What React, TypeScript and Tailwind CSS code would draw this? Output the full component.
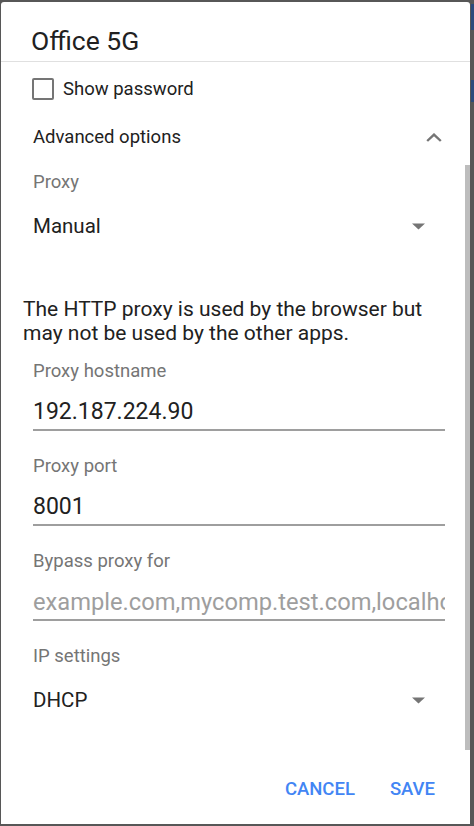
import React from 'react';

const Caret = () => (
  <svg width="13" height="7" viewBox="0 0 13 7" className="block">
    <path d="M0 0.5h13L6.5 6.5z" fill="#757575" />
  </svg>
);

const ChevronUp = () => (
  <svg width="16" height="9" viewBox="0 0 16 9" className="block">
    <path d="M1.2 8L8 1.6L14.8 8" fill="none" stroke="#757575" strokeWidth="2.4" />
  </svg>
);

const Field = ({ label, value, placeholder }: { label: string; value?: string; placeholder?: string }) => (
  <div className="pl-[32px] pr-[25px]">
    <div className="h-[24px] text-[18.5px] leading-[24px] text-[#757575]">{label}</div>
    <div
      className={`mt-[14px] h-[30px] overflow-hidden whitespace-nowrap leading-[30px] ${
        value ? 'text-[23px] text-[#212121]' : 'text-[23.7px] text-[#9e9e9e]'
      }`}
    >
      {value ?? placeholder}
    </div>
    <div className="mt-[2px] h-[2px] bg-[#9e9e9e]" />
  </div>
);

const SelectRow = ({ label, value }: { label: string; value: string }) => (
  <div className="pl-[32px] pr-[25px]">
    <div className="h-[24px] text-[18.5px] leading-[24px] text-[#757575]">{label}</div>
    <div className="mt-[18px] flex h-[28px] items-center justify-between pr-[20px]">
      <span className="text-[20.5px] leading-[28px] text-[#212121]">{value}</span>
      <Caret />
    </div>
  </div>
);

export default function App() {
  return (
    <div
      className="relative h-[826px] w-[474px] overflow-hidden bg-[#575757] pl-[1px] pt-[2px]"
      style={{ fontFamily: 'Roboto, "Noto Sans", sans-serif' }}
    >
      {/* bits of the screen behind the dialog */}
      <div className="absolute right-0 top-[4px] h-[26px] w-[3px] bg-[#2c4a7c]" />
      <div className="absolute right-0 top-[80px] h-[22px] w-[3px] bg-[#2c4a7c]" />

      <div className="relative flex h-[822px] w-[469px] flex-col rounded-t-[3px] bg-white">
        {/* Header */}
        <div className="pl-[30px] pt-[24px] pb-[5px]">
          <h1 className="text-[26.5px] leading-[30px] text-[#212121]">Office 5G</h1>
        </div>
        <div className="h-px bg-[#e0e0e0]" />

        {/* Body */}
        <div className="flex-1 overflow-hidden">
          <div className="mt-[16px] flex h-[22px] items-center gap-[9px] pl-[31px]">
            <div className="h-[22px] w-[22px] rounded-[2px] border-2 border-[#757575]" />
            <span className="text-[18.5px] leading-[22px] text-[#212121]">Show password</span>
          </div>

          <div className="mt-[25px] flex h-[24px] items-center justify-between pl-[32px] pr-[28px]">
            <span className="text-[18.5px] leading-[24px] text-[#212121]">Advanced options</span>
            <ChevronUp />
          </div>

          <div className="mt-[21px]">
            <SelectRow label="Proxy" value="Manual" />
          </div>

          <p className="mt-[57px] pl-[22px] pr-[25px] text-[21px] leading-[24px] text-[#212121]">
            The HTTP proxy is used by the browser but may not be used by the other apps.
          </p>

          <div className="mt-[14px]">
            <Field label="Proxy hostname" value="192.187.224.90" />
          </div>
          <div className="mt-[23px]">
            <Field label="Proxy port" value="8001" />
          </div>
          <div className="mt-[23px]">
            <Field label="Bypass proxy for" placeholder="example.com,mycomp.test.com,localhost" />
          </div>
          <div className="mt-[23px]">
            <SelectRow label="IP settings" value="DHCP" />
          </div>
        </div>

        {/* Footer */}
        <div className="flex justify-end gap-[35px] pb-[23px] pr-[35px]">
          <button className="h-[24px] text-[18.5px] font-medium leading-[24px] text-[#4285f4]">CANCEL</button>
          <button className="h-[24px] text-[18.5px] font-medium leading-[24px] text-[#4285f4]">SAVE</button>
        </div>

        {/* Scrollbar */}
        <div className="absolute right-0 top-[163px] h-[585px] w-[5px] bg-[#bdbdbd]" />
      </div>
    </div>
  );
}
